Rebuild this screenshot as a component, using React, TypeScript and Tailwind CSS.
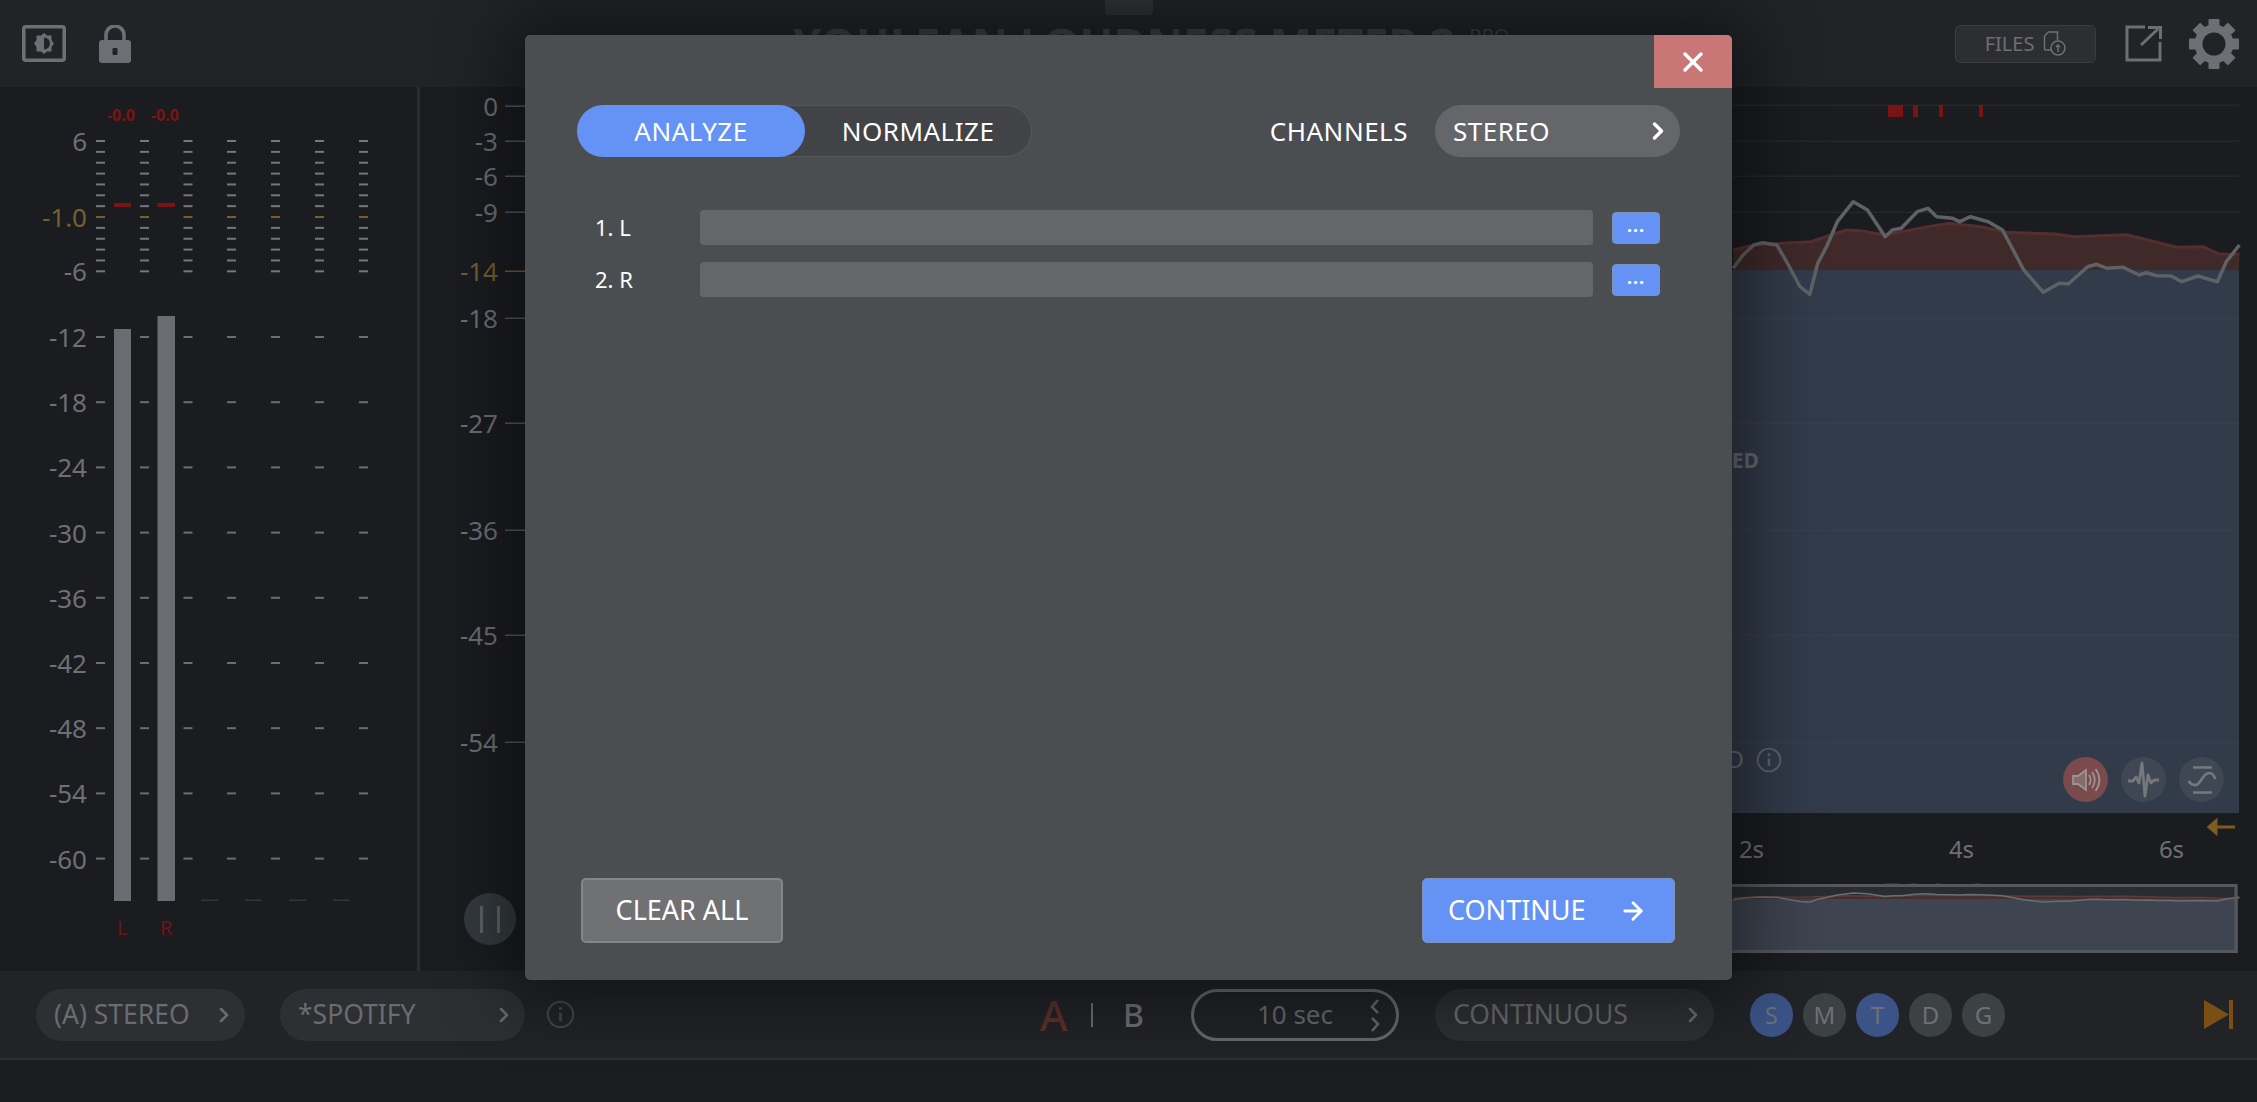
import { ChevronRight, X, ArrowRight } from "lucide-react";

const FONT = "font-['Noto_Sans','Open_Sans',sans-serif]";

// meter scale, y in page pixels
const meterLabels = [
  { t: "6", y: 141 },
  { t: "-1.0", y: 217, gold: true },
  { t: "-6", y: 271 },
  ...[-12, -18, -24, -30, -36, -42, -48, -54, -60].map((v, i) => ({ t: String(v), y: 337 + i * 65.2 })),
];
const fineTicks = Array.from({ length: 13 }, (_, i) => 141 + i * 10.86);
const coarseTicks = Array.from({ length: 9 }, (_, i) => 337 + i * 65.2);
const meterCols = [96, 140, 183.5, 227, 271, 315, 359];

const lufsLabels = [
  { t: "0", y: 106 },
  { t: "-3", y: 141 },
  { t: "-6", y: 176 },
  { t: "-9", y: 212 },
  { t: "-14", y: 271, gold: true },
  { t: "-18", y: 318 },
  { t: "-27", y: 423 },
  { t: "-36", y: 530 },
  { t: "-45", y: 635 },
  { t: "-54", y: 742 },
];

// curve points measured off the crop, x / 2.815 + 1703.5, y / 3
const redRaw = [[92,750],[150,735],[310,725],[410,690],[450,692],[520,705],[640,680],[700,670],[790,680],[860,697],[1000,702],[1050,710],[1200,704],[1340,742],[1415,740],[1460,762],[1517,763]];
const grayRaw = [[92,805],[120,765],[150,735],[175,728],[215,735],[245,790],[280,860],[308,883],[330,790],[355,740],[385,665],[430,605],[470,630],[520,710],[540,690],[565,685],[610,635],[640,625],[665,650],[710,655],[730,665],[760,650],[810,665],[850,690],[910,810],[965,877],[1010,850],[1035,852],[1090,800],[1115,793],[1145,805],[1190,802],[1235,825],[1255,818],[1285,827],[1325,828],[1355,845],[1400,828],[1455,845],[1480,785],[1517,735]];
const px = (x: number) => (x / 2.815 + 1703.5).toFixed(1);
const toPts = (raw: number[][]) => raw.map(([x, y]) => `${px(x)},${(y / 3).toFixed(1)}`).join(" ");
const overview = (raw: number[][]) => raw.map(([x, y]) => `${px(x)},${(893 + (y - 605) / 30).toFixed(1)}`).join(" ");

function ScaleLabel({ t, y, right, gold }: { t: string; y: number; right: number; gold?: boolean }) {
  return (
    <span
      className={`absolute text-[26px] leading-none ${gold ? "text-[#76602f]" : "text-[#6d7074]"}`}
      style={{ top: y - 87 - 13, right }}
    >
      {t}
    </span>
  );
}

function Pill({ label, className }: { label: string; className: string }) {
  return (
    <div className={`flex h-[52px] items-center justify-between rounded-full bg-[#2d2f32] pl-[18px] pr-[9px] text-[26.5px] text-[#696c70] ${className}`}>
      <span>{label}</span>
      <ChevronRight className="h-6 w-6" strokeWidth={2.5} />
    </div>
  );
}

function InfoIcon({ size, color }: { size: number; color: string }) {
  return (
    <svg width={size} height={size} viewBox="0 0 24 24" fill="none" stroke={color} strokeWidth="1.8">
      <circle cx="12" cy="12" r="10.5" />
      <path d="M12 10.5v7" strokeWidth="2.4" />
      <circle cx="12" cy="7" r="1.4" fill={color} stroke="none" />
    </svg>
  );
}

function ModeDot({ label, on }: { label: string; on?: boolean }) {
  return (
    <div className={`flex h-[44px] w-[43px] items-center justify-center rounded-full text-[24px] text-[#6d7075] ${on ? "bg-[#3b5387]" : "bg-[#3c4144]"}`}>
      {label}
    </div>
  );
}

function RoundTool({ color, children }: { color: string; children: React.ReactNode }) {
  return (
    <div className={`flex h-[45px] w-[45px] items-center justify-center rounded-full ${color}`}>{children}</div>
  );
}

function TopBar() {
  return (
    <div className="relative flex h-[87px] items-center bg-[#212327] pl-[22px] pr-[18px]">
      <svg width="44" height="37" viewBox="0 0 44 37" className="mr-[33px]">
        <rect x="1.8" y="1.8" width="40.4" height="33.4" rx="2" fill="none" stroke="#6c6f73" strokeWidth="3.6" />
        <path d="M22 8l3 2.500h4.500v4.500l2.500 3.500-2.500 3.500v4.500h-4.500l-3 2.500-3-2.500h-4.500v-4.500l-2.500-3.500 2.500-3.500v-4.500h4.500z" fill="#6c6f73" />
        <path d="M22 12.500a6 6 0 0 1 0 12z" fill="#212327" />
      </svg>
      <svg width="32" height="38" viewBox="0 0 32 38">
        <path d="M7 17v-7a9 9 0 0 1 18 0v7" fill="none" stroke="#6c6f73" strokeWidth="3.600" />
        <rect x="0" y="15" width="32" height="23" rx="3" fill="#6c6f73" />
        <rect x="13.500" y="23" width="5" height="7" rx="1" fill="#212327" />
      </svg>

      {/* title sits mostly behind the dialog */}
      <div className="absolute left-[793px] top-[21px] flex items-start text-[#3e4044]">
        <span className="text-[45px] font-bold leading-none whitespace-nowrap">YOULEAN LOUDNESS METER 2</span>
        <span className="ml-[14px] mt-[5px] text-[20px] leading-none">PRO</span>
      </div>
      <div className="absolute left-[1105px] top-0 h-[15px] w-[48px] rounded-b-[4px] bg-[#2f3135]" />

      <div className="ml-auto flex items-center">
        <div className="flex h-[38px] w-[141px] items-center justify-center gap-[9px] rounded-[5px] border border-[#3a3c40] bg-[#2c2e32] text-[20px] text-[#6c6f73]">
          FILES
          <svg width="23" height="25" viewBox="0 0 23 25" fill="none" stroke="#6c6f73" strokeWidth="1.500">
            <path d="M8 19H2.500a1 1 0 0 1-1-1V5l4-4h9v8" />
            <circle cx="15" cy="17" r="7" />
            <path d="M15 21v-7M13 16l2-2 2 2" />
          </svg>
        </div>
        <svg width="37" height="37" viewBox="0 0 37 37" fill="none" stroke="#6c6f73" strokeWidth="3" className="ml-[29px]">
          <path d="M20 2H2v33h33V17" />
          <path d="M16 20L33 4M23 2.500h12.500V14" />
        </svg>
        <svg width="50" height="50" viewBox="0 0 50 50" className="ml-[27px]">
          <g fill="#6c6f73">
            {[0, 45, 90, 135, 180, 225, 270, 315].map((a) => (
              <rect key={a} x="19.500" y="0" width="11" height="12" rx="1" transform={`rotate(${a} 25 25)`} />
            ))}
          </g>
          <circle cx="25" cy="25" r="15.500" fill="none" stroke="#6c6f73" strokeWidth="8" />
        </svg>
      </div>
    </div>
  );
}

function LevelMeters() {
  return (
    <div className="relative w-[420px] shrink-0 border-r-[3px] border-[#2a2c30]">
      <svg className="absolute left-0 top-0" width="417" height="884" viewBox="0 87 417 884">
        {meterCols.map((x) => (
          <g key={x}>
            {fineTicks.map((y, i) => (
              <rect key={y} x={x} y={y - 1} width="9" height="2" fill={i === 7 ? "#76602f" : "#74777b"} />
            ))}
            {coarseTicks.map((y) => (
              <rect key={y} x={x} y={y - 1} width="9" height="2" fill="#6a6d71" />
            ))}
          </g>
        ))}
        <rect x="114" y="329" width="17" height="572" fill="#696c70" />
        <rect x="157.500" y="316" width="17.500" height="585" fill="#696c70" />
        <rect x="114" y="203" width="17" height="4" fill="#7a1414" />
        <rect x="157.500" y="203" width="17.500" height="4" fill="#7a1414" />
        {[201, 245, 289, 333].map((x) => (
          <rect key={x} x={x} y="899.500" width="17" height="1.500" fill="#33353a" />
        ))}
      </svg>
      {meterLabels.map((l) => (
        <ScaleLabel key={l.t} t={l.t} y={l.y} right={330} gold={l.gold} />
      ))}
      <span className="absolute left-[107px] top-[17px] text-[16px] font-bold leading-[22px] text-[#7a1414]">-0.0</span>
      <span className="absolute left-[151px] top-[17px] text-[16px] font-bold leading-[22px] text-[#7a1414]">-0.0</span>
      <span className="absolute left-[117px] top-[829px] text-[20px] leading-6 text-[#6e1616]">L</span>
      <span className="absolute left-[160px] top-[829px] text-[20px] leading-6 text-[#6e1616]">R</span>
    </div>
  );
}

function History() {
  return (
    <div className="relative flex-1">
      <svg className="absolute left-0 top-0" width="1834" height="884" viewBox="423 87 1834 884">
        <polygon points={`${px(92)},270 ${toPts(redRaw)} 2242,270`} fill="#3f2929" />
        <polyline points={toPts(redRaw)} fill="none" stroke="#552e2f" strokeWidth="3" />
        <rect x="1733" y="270" width="509" height="543" fill="#323b4a" />
        {[105, 141, 176, 212].map((y) => (
          <rect key={y} x="508" y={y - 0.5} width="1734" height="1.500" fill="#25272b" />
        ))}
        {[318, 423, 530, 635, 742].map((y) => (
          <g key={y}>
            <rect x="508" y={y - 0.5} width="20" height="1.500" fill="#55585c" />
            <rect x="1733" y={y - 0.5} width="509" height="1.500" fill="#363f4e" />
          </g>
        ))}
        {[106, 141, 176, 212].map((y) => (
          <rect key={y} x="508" y={y - 0.5} width="20" height="1.500" fill="#55585c" />
        ))}
        <rect x="508" y="270.500" width="20" height="1.500" fill="#76602f" />
        {[[1891, 15], [1916, 5], [1942, 4], [1982, 4]].map(([x, w]) => (
          <rect key={x} x={x} y="105" width={w} height="12" fill="#7a1414" />
        ))}
        <polyline points={toPts(grayRaw)} fill="none" stroke="#5f6265" strokeWidth="3.500" strokeLinejoin="round" />

        {/* overview strip */}
        <rect x="1733" y="884" width="508" height="69" fill="#3e4450" />
        <rect x="1733" y="884" width="508" height="15" fill="#2b2c30" />
        <polygon points={`1733,899 ${overview(redRaw)} 2241,899`} fill="#43302f" />
        <polyline points={overview(redRaw)} fill="none" stroke="#5f3a3a" strokeWidth="1.500" />
        <polyline points={overview(grayRaw)} fill="none" stroke="#6b6e72" strokeWidth="1.500" />
        {[[1888, 14], [1914, 5], [1939, 5], [1978, 5]].map(([x, w]) => (
          <rect key={x} x={x} y="883" width={w} height="1.500" fill="#7a1414" />
        ))}
        <rect x="1720" y="885.500" width="519" height="66" fill="none" stroke="#55585f" strokeWidth="3" />
        <path d="M2238 827h-19M2219 821l-7 6 7 6z" fill="#7f5c1e" stroke="#7f5c1e" strokeWidth="3" />
      </svg>

      {lufsLabels.map((l) => (
        <ScaleLabel key={l.t} t={l.t} y={l.y} right={1759} gold={l.gold} />
      ))}

      <div className="absolute left-[1299px] top-[361px] flex w-[40px] justify-end text-[21px] font-bold leading-6 text-[#666a70]">ED</div>
      <div className="absolute left-[1302px] top-[658px] w-[22px] text-right text-[24px] leading-7 text-[#666a70]">D</div>
      <div className="absolute left-[1336px] top-[660px]"><InfoIcon size={26} color="#5c636d" /></div>

      <div className="absolute left-[1643px] top-[670px] flex gap-[13px]">
        <RoundTool color="bg-[#7a4a4c]">
          <svg width="32" height="32" viewBox="0 0 32 32" fill="none" stroke="#9a9494" strokeWidth="1.800">
            <path d="M3 12h5l8-6v20l-8-6H3z" fill="#9a9494" fillOpacity=".45" />
            <path d="M19 11c2 3 2 7 0 10M22 8c3.500 5 3.500 11 0 16M25.500 5c5 7 5 15 0 22" />
          </svg>
        </RoundTool>
        <RoundTool color="bg-[#3f4754]">
          <svg width="34" height="38" viewBox="0 0 34 38" fill="none" stroke="#75787c" strokeWidth="2.800" strokeLinejoin="round">
            <path d="M1 20h5l3-4 3 6 3-20 3 33 3-21 3 8 3-3h5" />
          </svg>
        </RoundTool>
        <RoundTool color="bg-[#3f4754]">
          <svg width="30" height="30" viewBox="0 0 30 30" fill="none" stroke="#75787c" strokeWidth="2.600">
            <path d="M6 2.500h19M6 27.500h19M1.500 16c4 5.500 8.500 5.500 12 0s5.500-8 9-8 4.500 3 6 6" />
          </svg>
        </RoundTool>
      </div>

      {[["2s", 1754.5], ["4s", 1964.5], ["6s", 2174.5]].map(([t, x]) => (
        <span
          key={t}
          className="absolute -translate-x-1/2 text-[24px] leading-7 text-[#6d7074]"
          style={{ left: Number(x) - 423, top: 748 }}
        >
          {t}
        </span>
      ))}

      <div className="absolute left-[44px] top-[806px] flex h-[52px] w-[52px] items-center justify-center gap-[14px] rounded-full bg-[#343a3e]">
        <span className="h-[27px] w-[3px] bg-[#5f6366]" />
        <span className="h-[27px] w-[3px] bg-[#5f6366]" />
      </div>
    </div>
  );
}

function BottomBar() {
  return (
    <div className="flex h-[89px] items-center border-b-2 border-[#2e3034] bg-[#212327] pl-[36px] pr-[24px]">
      <Pill label="(A) STEREO" className="w-[209px]" />
      <Pill label="*SPOTIFY" className="ml-[35px] w-[245px]" />
      <div className="ml-[21px]"><InfoIcon size={29} color="#43464a" /></div>

      <span className="ml-[465px] w-[32px] text-[42px] font-medium leading-none text-[#5e302d]">A</span>
      <span className="ml-[19px] h-[24px] w-[2px] bg-[#6c6f73]" />
      <span className="ml-[30px] text-[32px] font-medium leading-none text-[#6c6f73]">B</span>

      <div className="relative ml-[47px] flex h-[52px] w-[208px] items-center justify-center rounded-full border-[3px] border-[#66686b] text-[26px] text-[#66696d]">
        10 sec
        <svg width="12" height="34" viewBox="0 0 12 34" fill="none" stroke="#66696d" strokeWidth="2.500" className="absolute right-[15px] top-[6px]">
          <path d="M9 2L3 9l6 6M3 20l6 6-6 7" />
        </svg>
      </div>

      <Pill label="CONTINUOUS" className="ml-[36px] w-[279px]" />

      <div className="ml-[36px] flex gap-[10px]">
        <ModeDot label="S" on />
        <ModeDot label="M" />
        <ModeDot label="T" on />
        <ModeDot label="D" />
        <ModeDot label="G" />
      </div>

      <svg width="29" height="29" viewBox="0 0 29 29" className="ml-auto">
        <path d="M0 0l25 14.500L0 29z" fill="#7a4f14" />
        <rect x="25" y="0" width="4" height="29" fill="#7a4f14" />
      </svg>
    </div>
  );
}

function ChannelRow({ label }: { label: string }) {
  return (
    <div className="flex h-[35px] items-center">
      <span className="w-[123px] pl-[18px] text-[22px] text-white">{label}</span>
      <div className="h-[35px] w-[893px] rounded-[4px] bg-[#65666a]" />
      <div className="ml-[19px] flex h-[32px] w-[48px] items-center justify-center rounded-[4px] border border-[#7d93c0] bg-[#6492f5] text-[18px] font-bold leading-none tracking-[1px] text-white">
        <span className="-mt-[6px]">...</span>
      </div>
    </div>
  );
}

function AnalyzeDialog() {
  return (
    <div className="absolute left-[525px] top-[35px] flex h-[945px] w-[1207px] flex-col rounded-[5px] bg-[#4b4e51] pb-[37px] pl-[52px] pr-[52px] pt-[70px] text-white shadow-[0_0_70px_20px_rgba(0,0,0,0.45)]">
      <button className="absolute right-0 top-0 flex h-[53px] w-[78px] items-center justify-center rounded-tr-[5px] bg-[#c87676]">
        <X className="h-8 w-8 text-white" strokeWidth={2.5} />
      </button>

      <div className="flex items-center text-[26px] tracking-[0.5px]">
        <div className="flex h-[52px] w-[455px] items-center rounded-full border border-[#56575b] bg-[#424347]">
          <div className="-ml-px flex h-[52px] w-[228px] items-center justify-center rounded-full bg-[#6492f5]">ANALYZE</div>
          <div className="flex-1 text-center">NORMALIZE</div>
        </div>
        <span className="ml-auto">CHANNELS</span>
        <div className="ml-[27px] flex h-[52px] w-[245px] items-center justify-between rounded-full bg-[#65666a] pl-[18px] pr-[8px]">
          STEREO
          <ChevronRight className="h-7 w-7" strokeWidth={3} />
        </div>
      </div>

      <div className="mt-[53px] flex flex-col gap-[17px]">
        <ChannelRow label="1. L" />
        <ChannelRow label="2. R" />
      </div>

      <div className="mt-auto flex items-center justify-between pl-[4px] pr-[5px] text-[27px]">
        <button className="h-[65px] w-[202px] rounded-[5px] border-2 border-[#858688] bg-[#707173]">CLEAR ALL</button>
        <button className="flex h-[65px] w-[253px] items-center justify-between rounded-[5px] border border-[#7d93c0] bg-[#6492f5] pl-[25px] pr-[27px]">
          CONTINUE
          <ArrowRight className="h-7 w-7" strokeWidth={2.5} />
        </button>
      </div>
    </div>
  );
}

export default function App() {
  return (
    <div className={`relative h-[1102px] w-[2257px] overflow-hidden bg-[#1b1d21] ${FONT}`}>
      <TopBar />
      <div className="flex h-[884px] bg-[#1a1c20]">
        <LevelMeters />
        <History />
      </div>
      <BottomBar />
      <AnalyzeDialog />
    </div>
  );
}
